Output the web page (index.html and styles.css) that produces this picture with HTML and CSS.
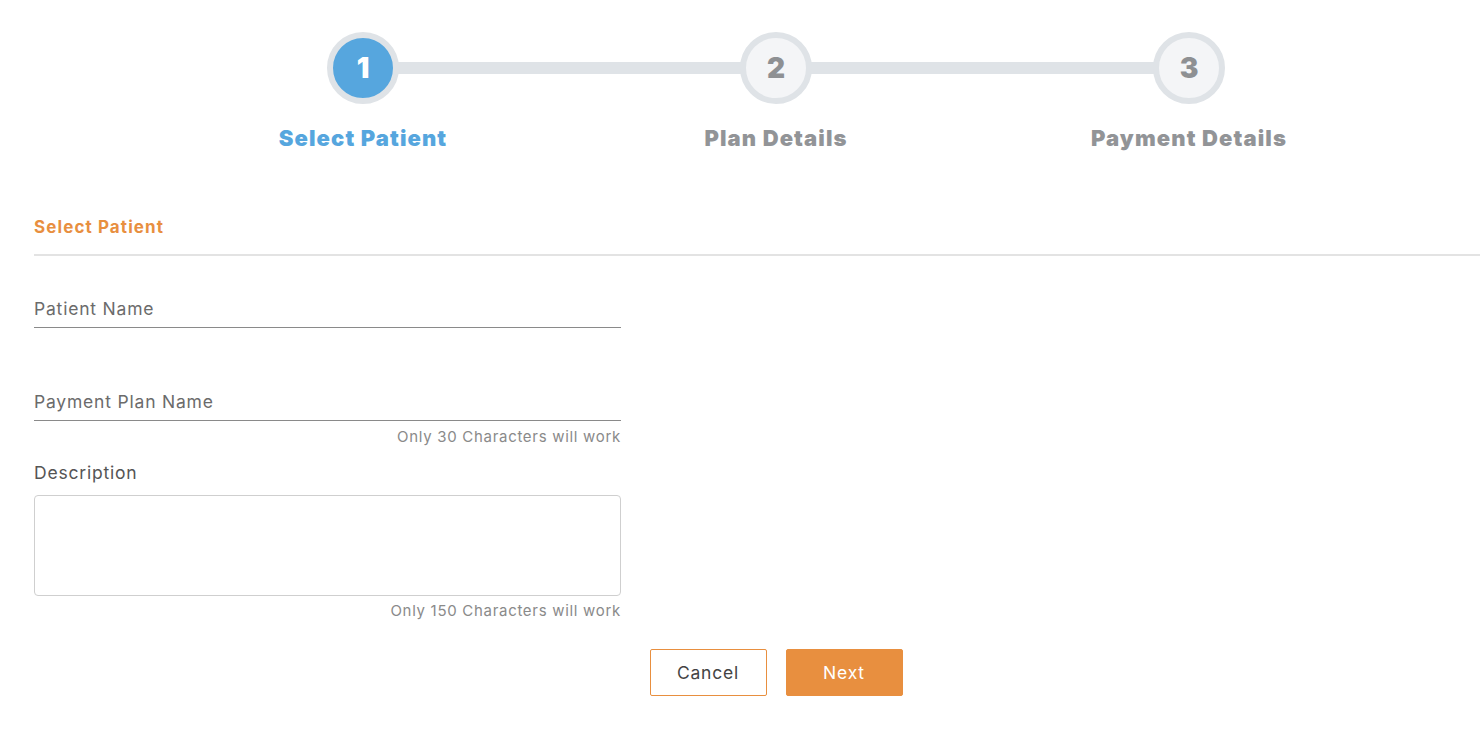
FILE: index.html
```html
<!DOCTYPE html>
<html lang="en">
<head>
    <meta charset="UTF-8">
    <meta name="viewport" content="width=device-width, initial-scale=1.0">
    <title>New Payment Plan</title>
    <link rel="stylesheet" href="styles.css">
</head>
<body>
    <div class="page">
        <div class="stepper">
            <div class="step active">
                <div class="step-circle">1</div>
                <div class="step-label">Select Patient</div>
            </div>
            <div class="step">
                <div class="step-circle">2</div>
                <div class="step-label">Plan Details</div>
            </div>
            <div class="step">
                <div class="step-circle">3</div>
                <div class="step-label">Payment Details</div>
            </div>
        </div>

        <div class="section-title">Select Patient</div>

        <form class="plan-form">
            <div class="field">
                <input type="text" class="line-input" placeholder="Patient Name">
            </div>
            <div class="field field-plan">
                <input type="text" class="line-input" placeholder="Payment Plan Name" maxlength="30">
                <div class="hint">Only 30 Characters will work</div>
            </div>
            <div class="field field-desc">
                <label for="description">Description</label>
                <textarea id="description" maxlength="150"></textarea>
                <div class="hint hint-desc">Only 150 Characters will work</div>
            </div>
        </form>

        <div class="actions">
            <button type="button" class="btn btn-outline">Cancel</button>
            <button type="button" class="btn btn-primary">Next</button>
        </div>
    </div>
</body>
</html>
```

FILE: styles.css
```css
html, body {
    margin: 0;
    padding: 0;
    background-color: #fff;
    overflow: hidden;
    font-family: Inter, "Open Sans", sans-serif;
}

.page {
    width: 1484px;
    margin-left: 34px;
    padding-top: 32px;
}

/* stepper */
.stepper {
    display: grid;
    grid-template-columns: repeat(3, 413px);
    justify-content: center;
}

.step {
    position: relative;
    display: flex;
    flex-direction: column;
    align-items: center;
}

.step + .step::before {
    content: "";
    position: absolute;
    top: 30px;
    right: 50%;
    width: 413px;
    height: 12px;
    background-color: #dfe3e7;
    z-index: 0;
}

.step-circle {
    position: relative;
    z-index: 1;
    width: 60px;
    height: 60px;
    border: 6px solid #dfe3e7;
    border-radius: 50%;
    background-color: #f4f5f7;
    color: #8e9093;
    font-size: 28px;
    font-weight: 900;
    display: flex;
    align-items: center;
    justify-content: center;
}

.step-label {
    margin-top: 20px;
    font-size: 22px;
    line-height: 28px;
    font-weight: 900;
    letter-spacing: 1.1px;
    color: #929497;
}

.step.active .step-circle {
    background-color: #56a6de;
    color: #fff;
}

.step.active .step-label {
    color: #56a6de;
}

/* section */
.section-title {
    margin-top: 65px;
    padding-bottom: 17px;
    border-bottom: 2px solid #e3e3e3;
    font-size: 17px;
    line-height: 20px;
    font-weight: 700;
    letter-spacing: 1.1px;
    color: #e88f3f;
}

.plan-form {
    width: 587px;
    padding-top: 34px;
}

.field-plan {
    margin-top: 55px;
}

.line-input {
    display: block;
    width: 100%;
    box-sizing: border-box;
    height: 38px;
    padding: 0;
    border: none;
    border-bottom: 1px solid #8a8a8a;
    font-family: inherit;
    font-size: 17.5px;
    letter-spacing: 0.8px;
    color: #444;
    outline: none;
}

.line-input::placeholder {
    color: #6b6b6b;
}

.hint {
    margin-top: 7px;
    text-align: right;
    font-size: 15px;
    line-height: 18px;
    letter-spacing: 0.7px;
    color: #8a8a8a;
}

.field-desc {
    margin-top: 16px;
}

.field-desc label {
    display: block;
    font-size: 17.5px;
    line-height: 22px;
    letter-spacing: 0.8px;
    color: #555;
}

.field-desc textarea {
    display: block;
    width: 100%;
    box-sizing: border-box;
    height: 101px;
    margin-top: 11px;
    border: 1px solid #cfcfcf;
    border-radius: 4px;
    resize: none;
    font-family: inherit;
    outline: none;
}

.hint-desc {
    margin-top: 6px;
}

/* buttons */
.actions {
    display: flex;
    justify-content: center;
    gap: 19px;
    margin-top: 29px;
}

.btn {
    width: 117px;
    height: 47px;
    border-radius: 2px;
    font-family: inherit;
    font-size: 17.5px;
    letter-spacing: 0.8px;
    cursor: pointer;
}

.btn-outline {
    background-color: #fff;
    border: 1px solid #e88f3f;
    color: #444;
}

.btn-primary {
    background-color: #e88f3f;
    border: 1px solid #e88f3f;
    color: #fff;
}
```
